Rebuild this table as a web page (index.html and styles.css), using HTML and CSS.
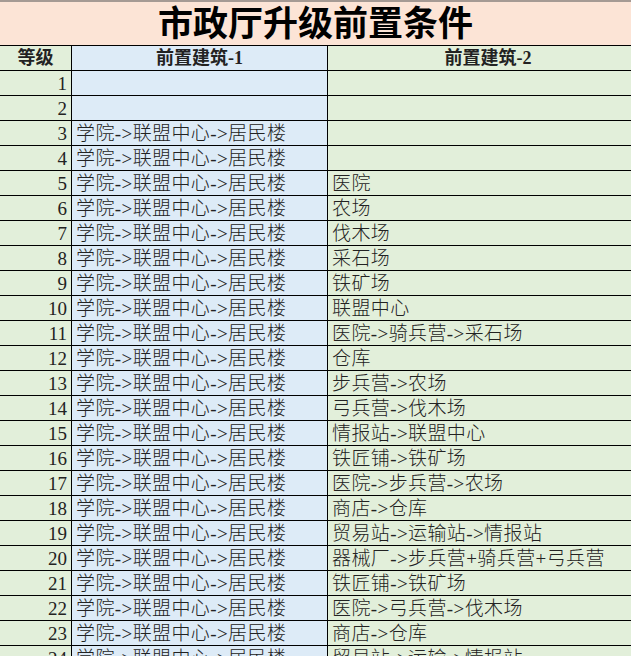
FILE: index.html
```html
<!DOCTYPE html>
<html lang="zh">
<head>
<meta charset="utf-8">
<title>市政厅升级前置条件</title>
<link rel="stylesheet" href="styles.css">
</head>
<body>
<div class="sheet">
  <div class="title">市政厅升级前置条件</div>
  <div class="grid">
    <div class="c lv head">等级</div><div class="c p1 head">前置建筑-1</div><div class="c p2 head">前置建筑-2</div>
    <div class="c lv">1</div><div class="c p1"></div><div class="c p2"></div>
    <div class="c lv">2</div><div class="c p1"></div><div class="c p2"></div>
    <div class="c lv">3</div><div class="c p1">学院-&gt;联盟中心-&gt;居民楼</div><div class="c p2"></div>
    <div class="c lv">4</div><div class="c p1">学院-&gt;联盟中心-&gt;居民楼</div><div class="c p2"></div>
    <div class="c lv">5</div><div class="c p1">学院-&gt;联盟中心-&gt;居民楼</div><div class="c p2">医院</div>
    <div class="c lv">6</div><div class="c p1">学院-&gt;联盟中心-&gt;居民楼</div><div class="c p2">农场</div>
    <div class="c lv">7</div><div class="c p1">学院-&gt;联盟中心-&gt;居民楼</div><div class="c p2">伐木场</div>
    <div class="c lv">8</div><div class="c p1">学院-&gt;联盟中心-&gt;居民楼</div><div class="c p2">采石场</div>
    <div class="c lv">9</div><div class="c p1">学院-&gt;联盟中心-&gt;居民楼</div><div class="c p2">铁矿场</div>
    <div class="c lv">10</div><div class="c p1">学院-&gt;联盟中心-&gt;居民楼</div><div class="c p2">联盟中心</div>
    <div class="c lv">11</div><div class="c p1">学院-&gt;联盟中心-&gt;居民楼</div><div class="c p2">医院-&gt;骑兵营-&gt;采石场</div>
    <div class="c lv">12</div><div class="c p1">学院-&gt;联盟中心-&gt;居民楼</div><div class="c p2">仓库</div>
    <div class="c lv">13</div><div class="c p1">学院-&gt;联盟中心-&gt;居民楼</div><div class="c p2">步兵营-&gt;农场</div>
    <div class="c lv">14</div><div class="c p1">学院-&gt;联盟中心-&gt;居民楼</div><div class="c p2">弓兵营-&gt;伐木场</div>
    <div class="c lv">15</div><div class="c p1">学院-&gt;联盟中心-&gt;居民楼</div><div class="c p2">情报站-&gt;联盟中心</div>
    <div class="c lv">16</div><div class="c p1">学院-&gt;联盟中心-&gt;居民楼</div><div class="c p2">铁匠铺-&gt;铁矿场</div>
    <div class="c lv">17</div><div class="c p1">学院-&gt;联盟中心-&gt;居民楼</div><div class="c p2">医院-&gt;步兵营-&gt;农场</div>
    <div class="c lv">18</div><div class="c p1">学院-&gt;联盟中心-&gt;居民楼</div><div class="c p2">商店-&gt;仓库</div>
    <div class="c lv">19</div><div class="c p1">学院-&gt;联盟中心-&gt;居民楼</div><div class="c p2">贸易站-&gt;运输站-&gt;情报站</div>
    <div class="c lv">20</div><div class="c p1">学院-&gt;联盟中心-&gt;居民楼</div><div class="c p2">器械厂-&gt;步兵营+骑兵营+弓兵营</div>
    <div class="c lv">21</div><div class="c p1">学院-&gt;联盟中心-&gt;居民楼</div><div class="c p2">铁匠铺-&gt;铁矿场</div>
    <div class="c lv">22</div><div class="c p1">学院-&gt;联盟中心-&gt;居民楼</div><div class="c p2">医院-&gt;弓兵营-&gt;伐木场</div>
    <div class="c lv">23</div><div class="c p1">学院-&gt;联盟中心-&gt;居民楼</div><div class="c p2">商店-&gt;仓库</div>
    <div class="c lv">24</div><div class="c p1">学院-&gt;联盟中心-&gt;居民楼</div><div class="c p2">贸易站-&gt;运输-&gt;情报站</div>
  </div>
</div>
</body>
</html>
```
FILE: styles.css
```css
html, body {
  margin: 0;
  padding: 0;
  background: #ffffff;
}
.sheet {
  width: 631px;
  height: 656px;
  overflow: hidden;
  font-family: "Liberation Serif", "Noto Sans CJK SC", serif;
  color: #222222;
}
.title {
  height: 43px;
  border-top: 2px solid #a59a94;
  border-bottom: 1px solid #000;
  background: #fce4d6;
  text-align: center;
  font-size: 35px;
  font-weight: bold;
  line-height: 45px;
  color: #000;
}
.grid {
  display: grid;
  grid-template-columns: 71px 255px 320px;
  grid-auto-rows: 24px;
  gap: 1px;
  background: #000;
}
.c {
  font-size: 19px;
  font-weight: 300;
  line-height: 25px;
  letter-spacing: 0.4px;
  white-space: nowrap;
  overflow: hidden;
}
.lv {
  background: #e2efda;
  text-align: right;
  padding-right: 4px;
  letter-spacing: 0;
}
.p1 {
  background: #ddebf7;
  padding-left: 4px;
}
.p2 {
  background: #e2efda;
  padding-left: 4px;
}
.head {
  font-weight: bold;
  text-align: center;
  padding: 0;
  font-size: 18px;
  letter-spacing: 0;
}
```
